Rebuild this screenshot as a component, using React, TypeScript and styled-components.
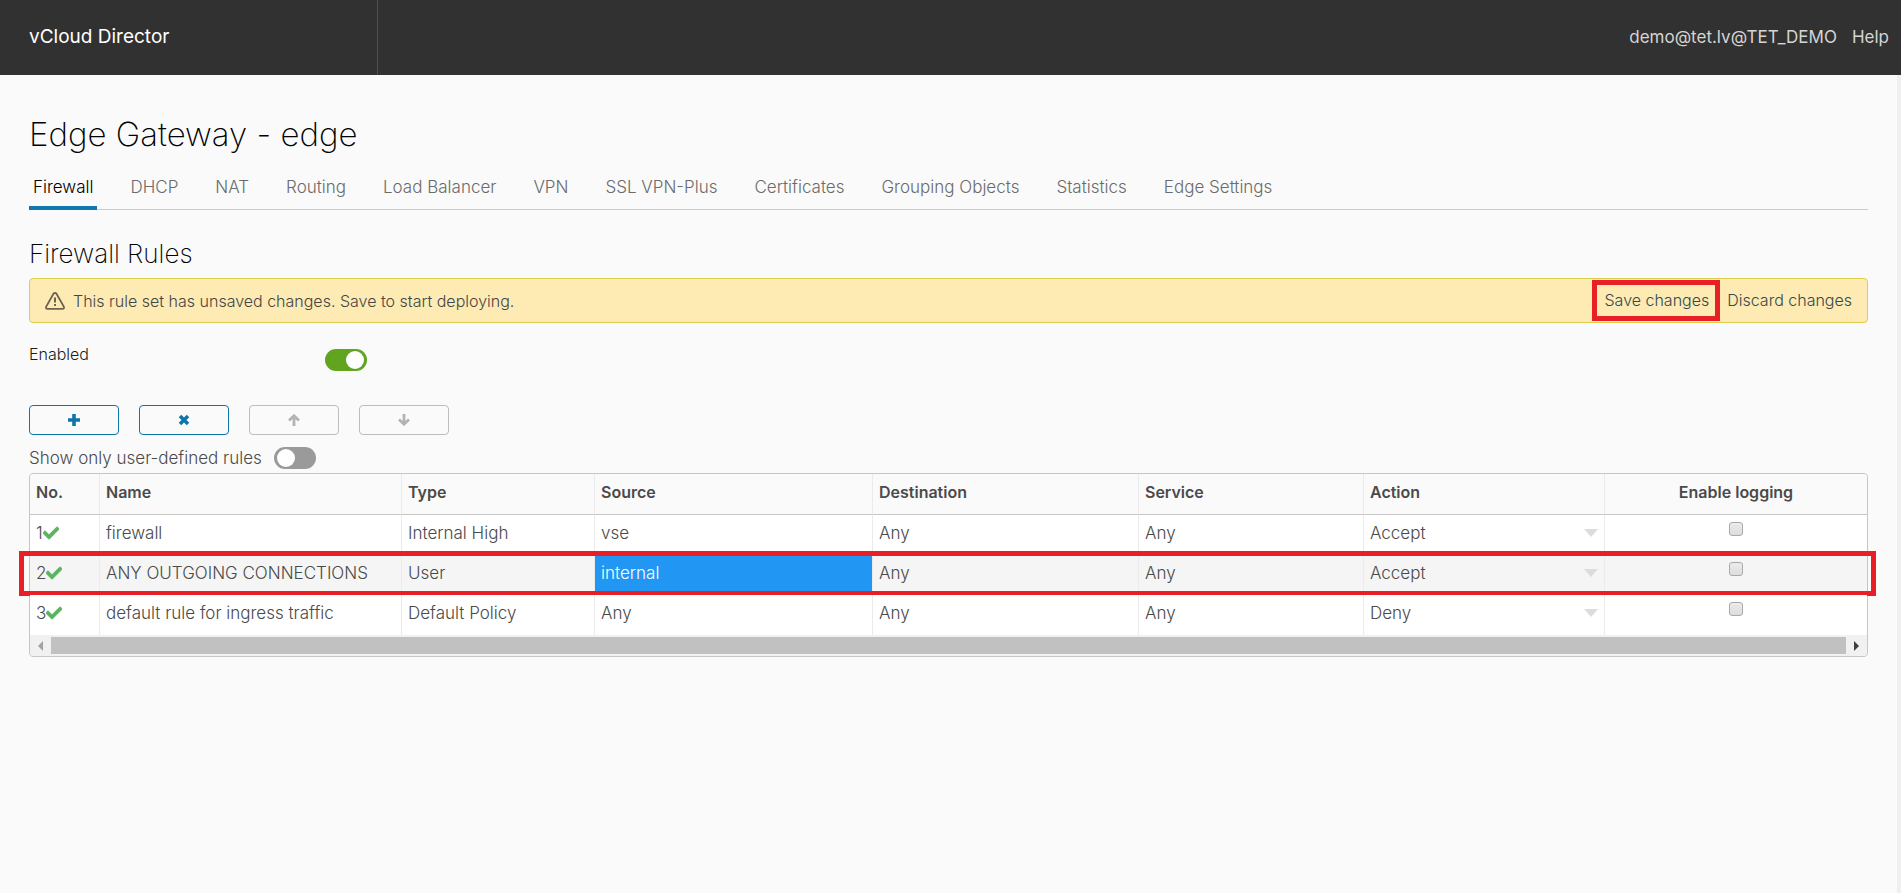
import React, { useState } from 'react';
import styled, { createGlobalStyle, css } from 'styled-components';
import { FaCheck } from 'react-icons/fa';

const GlobalStyle = createGlobalStyle`
  *, *::before, *::after { box-sizing: border-box; }
  html { background: #fafafa; }
  body {
    margin: 0;
    font-family: Inter, "Liberation Sans", sans-serif;
    font-size: 17px;
    font-weight: 300;
    line-height: 20px;
    color: #4a4a4a;
  }
  button, select, input { font: inherit; color: inherit; }
`;

const Page = styled.div`
  min-height: 100vh;
  display: flex;
  flex-direction: column;
`;

const Header = styled.header`
  display: flex;
  align-items: stretch;
  justify-content: space-between;
  height: 75px;
  background: #313131;
`;

const Brand = styled.div`
  width: 378px;
  padding: 25px 29px;
  border-right: 1px solid #4f4f4f;
  color: #fff;
  font-size: 19px;
  font-weight: 400;
  line-height: 24px;
`;

const UserNav = styled.nav`
  display: flex;
  gap: 15px;
  padding: 25px 12px;
`;

const UserLink = styled.a`
  color: #d5d5d5;
  font-size: 17px;
  font-weight: 400;
  line-height: 24px;
  text-decoration: none;
`;

const Body = styled.div`
  flex: 1;
  display: flex;
`;

const Content = styled.main`
  flex: 1;
  min-width: 0;
  padding: 39px 29px 40px;
`;

const Gutter = styled.div`
  width: 4px;
  background: #f0f0f0;
`;

const PageTitle = styled.h1`
  margin: 0;
  color: #000;
  font-size: 33px;
  font-weight: 200;
  line-height: 40px;
`;

const Tabs = styled.nav`
  display: flex;
  gap: 29px;
  margin-top: 20px;
  border-bottom: 1px solid #ccc;
`;

const Tab = styled.a<{ $active?: boolean }>`
  margin-bottom: -1px;
  padding: 3px 4px 9px;
  border-bottom: 4px solid ${p => (p.$active ? '#0f79ae' : 'transparent')};
  color: ${p => (p.$active ? '#000' : '#6b6b6b')};
  text-decoration: none;
  white-space: nowrap;
`;

const SectionTitle = styled.h2`
  margin: 28px 0 8px;
  color: #000;
  font-size: 26px;
  font-weight: 200;
  line-height: 32px;
`;

const Alert = styled.div`
  display: flex;
  align-items: center;
  height: 45px;
  padding: 0 15px;
  border: 1px solid #dfcf4e;
  border-radius: 4px;
  background: #fdebb3;
  color: #454545;
  font-size: 16px;
`;

const AlertText = styled.span`
  flex: 1;
  padding-left: 8px;
`;

const AlertActions = styled.div`
  display: flex;
  gap: 18px;
  padding-bottom: 2px;
`;

const AlertAction = styled.button<{ $marked?: boolean }>`
  position: relative;
  padding: 0;
  border: 0;
  background: none;
  color: #33494f;
  cursor: pointer;
  ${p => p.$marked && css`
    &::after {
      content: '';
      position: absolute;
      inset: -10px -11px -11px -13px;
      border: 5px solid #e81f26;
      pointer-events: none;
    }
  `}
`;

const EnabledRow = styled.div`
  display: flex;
  align-items: flex-start;
  height: 56px;
  margin-top: 26px;
`;

const EnabledLabel = styled.label`
  width: 296px;
  margin-top: -5px;
  color: #1c1c1c;
  font-size: 16px;
`;

const Toggle = styled.input`
  appearance: none;
  flex: none;
  width: 42px;
  height: 22px;
  margin: 0;
  padding: 2px 3px;
  border-radius: 11px;
  background: #9a9a9a;
  cursor: pointer;
  &::before {
    content: '';
    display: block;
    width: 18px;
    height: 18px;
    border-radius: 50%;
    background: #fff;
  }
  &:checked { background: #61a420; }
  &:checked::before { margin-left: auto; }
`;

const Toolbar = styled.div`
  display: flex;
  gap: 20px;
`;

const ToolButton = styled.button`
  display: flex;
  align-items: center;
  justify-content: center;
  width: 90px;
  height: 30px;
  padding: 0;
  border: 1px solid #0f75a8;
  border-radius: 4px;
  background: transparent;
  color: #0f75a8;
  cursor: pointer;
  &:disabled {
    border-color: #bdbdbd;
    color: #b3b3b3;
    cursor: default;
  }
`;

const FilterRow = styled.div`
  display: flex;
  align-items: center;
  gap: 12px;
  height: 26px;
  margin: 10px 0 2px;
`;

const TableFrame = styled.div`
  border: 1px solid #c6c6c6;
  border-radius: 4px;
  background: #fff;
`;

const RuleTable = styled.table`
  width: 100%;
  table-layout: fixed;
  border-collapse: separate;
  border-spacing: 0;
`;

const HeadCell = styled.th<{ $center?: boolean }>`
  height: 41px;
  padding: 8px 6px 0;
  border-bottom: 1px solid #c6c6c6;
  border-right: 1px solid #ebebeb;
  background: #fafafa;
  font-size: 16px;
  font-weight: 600;
  text-align: ${p => (p.$center ? 'center' : 'left')};
  vertical-align: top;
  &:first-child { border-top-left-radius: 4px; }
  &:last-child { border-right: 0; border-top-right-radius: 4px; }
`;

const Row = styled.tr<{ $marked?: boolean }>`
  position: relative;
  background: ${p => (p.$marked ? '#f5f5f5' : '#fff')};
  ${p => p.$marked && css`
    &::after {
      content: '';
      position: absolute;
      inset: -4px -9px -1px -11px;
      border: 5px solid #e81f26;
      pointer-events: none;
    }
  `}
`;

const Cell = styled.td<{ $selected?: boolean }>`
  height: 40px;
  padding: 8px 6px 0;
  border-right: 1px solid #ebebeb;
  vertical-align: top;
  white-space: nowrap;
  &:last-child { border-right: 0; padding-top: 7px; }
  ${p => p.$selected && css`
    background: #2196f3;
    color: #fff;
  `}
`;

const NumberLine = styled.span`
  display: flex;
  align-items: center;
  color: #4a4a4a;
  svg {
    color: #5bb560;
    stroke: #5bb560;
    stroke-width: 32px;
  }
`;

const SelectLine = styled.span`
  display: flex;
  align-items: center;
  svg { margin-left: -14px; pointer-events: none; }
`;

const ActionSelect = styled.select`
  appearance: none;
  flex: 1;
  height: 20px;
  padding: 0;
  border: 0;
  background: transparent;
`;

const CheckBox = styled.input`
  appearance: none;
  display: block;
  width: 14px;
  height: 14px;
  margin: 0 auto;
  border: 1px solid #a9a9a9;
  border-radius: 3px;
  background: linear-gradient(#ececec, #dcdcdc);
  &:checked { background: #0f79ae; }
`;

const ScrollBar = styled.div`
  display: flex;
  align-items: center;
  height: 21px;
  background: #f1f1f1;
  border-radius: 0 0 4px 4px;
`;

const ScrollArrow = styled.button`
  display: flex;
  align-items: center;
  justify-content: center;
  width: 21px;
  height: 21px;
  padding: 0;
  border: 0;
  background: none;
`;

const ScrollThumb = styled.div`
  flex: 1;
  height: 17px;
  background: #c1c1c1;
`;

const WarningIcon = () => (
  <svg width="20" height="18" viewBox="0 0 20 18" fill="none" stroke="#6b6350" strokeWidth="1.8" aria-hidden="true">
    <path d="M8.5 1.8 1.2 14.6c-.6 1.2 0 2.3 1.3 2.3h15c1.3 0 1.9-1.1 1.3-2.3L11.5 1.8c-.7-1.2-2.3-1.2-3 0Z" />
    <path d="M10 5.5v5M10 12v2" strokeWidth="2" />
  </svg>
);

const glyphs = {
  add: 'M6 0v12M0 6h12',
  remove: 'M2 2l8 8M10 2l-8 8',
  up: 'M6 12V2M1 6.5 6 1.8l5 4.7',
  down: 'M6 0v10M1 5.5l5 4.7 5-4.7',
};

const ToolGlyph = ({ name }: { name: keyof typeof glyphs }) => {
  const arrow = name === 'up' || name === 'down';
  return (
    <svg width="14" height="12" viewBox="-1 0 14 12" fill="none" stroke="currentColor" strokeWidth={arrow ? 2.8 : 3.6} aria-hidden="true">
      <path d={glyphs[name]} />
    </svg>
  );
};

const tabs = ['Firewall', 'DHCP', 'NAT', 'Routing', 'Load Balancer', 'VPN', 'SSL VPN-Plus', 'Certificates', 'Grouping Objects', 'Statistics', 'Edge Settings'];

const columns = [
  { title: 'No.', width: 70 },
  { title: 'Name', width: 302 },
  { title: 'Type', width: 193 },
  { title: 'Source', width: 278 },
  { title: 'Destination', width: 266 },
  { title: 'Service', width: 225 },
  { title: 'Action', width: 241 },
  { title: 'Enable logging', width: 262 },
];

const rules = [
  { no: 1, name: 'firewall', type: 'Internal High', source: 'vse', action: 'Accept' },
  { no: 2, name: 'ANY OUTGOING CONNECTIONS', type: 'User', source: 'internal', action: 'Accept', marked: true },
  { no: 3, name: 'default rule for ingress traffic', type: 'Default Policy', source: 'Any', action: 'Deny' },
];

export default function App() {
  const [enabled, setEnabled] = useState(true);
  const [userOnly, setUserOnly] = useState(false);

  return (
    <Page>
      <GlobalStyle />
      <Header>
        <Brand>vCloud Director</Brand>
        <UserNav>
          <UserLink href="#user">demo@tet.lv@TET_DEMO</UserLink>
          <UserLink href="#help">Help</UserLink>
        </UserNav>
      </Header>
      <Body>
        <Content>
          <PageTitle>Edge Gateway - edge</PageTitle>
          <Tabs>
            {tabs.map((tab, i) => (
              <Tab key={tab} href="#" $active={i === 0}>{tab}</Tab>
            ))}
          </Tabs>
          <SectionTitle>Firewall Rules</SectionTitle>
          <Alert role="alert">
            <WarningIcon />
            <AlertText>This rule set has unsaved changes. Save to start deploying.</AlertText>
            <AlertActions>
              <AlertAction type="button" $marked>Save changes</AlertAction>
              <AlertAction type="button">Discard changes</AlertAction>
            </AlertActions>
          </Alert>
          <EnabledRow>
            <EnabledLabel htmlFor="enabled">Enabled</EnabledLabel>
            <Toggle id="enabled" type="checkbox" checked={enabled} onChange={e => setEnabled(e.target.checked)} />
          </EnabledRow>
          <Toolbar>
            <ToolButton type="button" aria-label="Add rule"><ToolGlyph name="add" /></ToolButton>
            <ToolButton type="button" aria-label="Delete rule"><ToolGlyph name="remove" /></ToolButton>
            <ToolButton type="button" aria-label="Move up" disabled><ToolGlyph name="up" /></ToolButton>
            <ToolButton type="button" aria-label="Move down" disabled><ToolGlyph name="down" /></ToolButton>
          </Toolbar>
          <FilterRow>
            <label htmlFor="user-only">Show only user-defined rules</label>
            <Toggle id="user-only" type="checkbox" checked={userOnly} onChange={e => setUserOnly(e.target.checked)} />
          </FilterRow>
          <TableFrame>
            <RuleTable>
              <colgroup>
                {columns.map(c => <col key={c.title} width={c.width} />)}
              </colgroup>
              <thead>
                <tr>
                  {columns.map(c => (
                    <HeadCell key={c.title} scope="col" $center={c.title === 'Enable logging'}>{c.title}</HeadCell>
                  ))}
                </tr>
              </thead>
              <tbody>
                {rules.map(r => (
                  <Row key={r.no} $marked={r.marked}>
                    <Cell><NumberLine>{r.no}<FaCheck size={16} aria-hidden="true" /></NumberLine></Cell>
                    <Cell>{r.name}</Cell>
                    <Cell>{r.type}</Cell>
                    <Cell $selected={r.marked}>{r.source}</Cell>
                    <Cell>Any</Cell>
                    <Cell>Any</Cell>
                    <Cell>
                      <SelectLine>
                        <ActionSelect aria-label={`Action of rule ${r.no}`} defaultValue={r.action}>
                          <option>Accept</option>
                          <option>Deny</option>
                        </ActionSelect>
                        <svg width="14" height="8" viewBox="0 0 14 8" aria-hidden="true"><path d="M0 0h14L7 8z" fill="#dcdcdc" /></svg>
                      </SelectLine>
                    </Cell>
                    <Cell><CheckBox type="checkbox" aria-label={`Enable logging for rule ${r.no}`} /></Cell>
                  </Row>
                ))}
              </tbody>
            </RuleTable>
            <ScrollBar>
              <ScrollArrow type="button" aria-label="Scroll left">
                <svg width="5" height="10" viewBox="0 0 5 10" aria-hidden="true"><path d="M5 0v10L0 5z" fill="#a3a3a3" /></svg>
              </ScrollArrow>
              <ScrollThumb />
              <ScrollArrow type="button" aria-label="Scroll right">
                <svg width="5" height="10" viewBox="0 0 5 10" aria-hidden="true"><path d="M0 0v10l5-5z" fill="#404040" /></svg>
              </ScrollArrow>
            </ScrollBar>
          </TableFrame>
        </Content>
        <Gutter />
      </Body>
    </Page>
  );
}
